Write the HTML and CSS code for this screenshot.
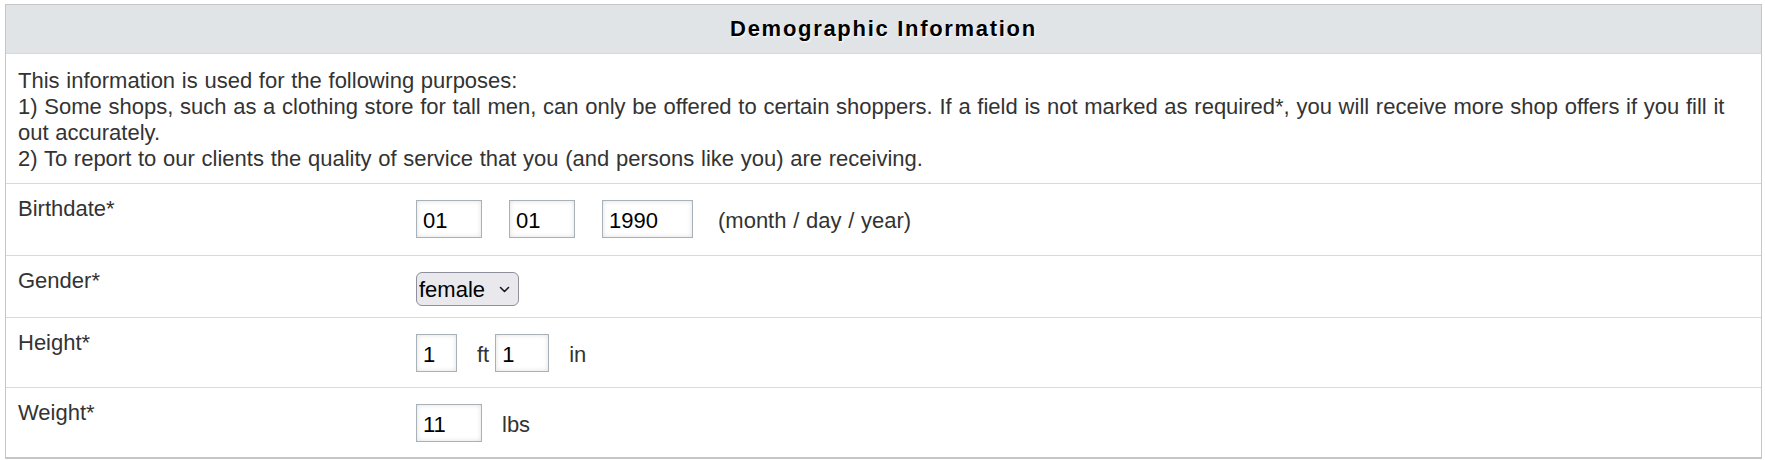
FILE: index.html
```html
<!DOCTYPE html>
<html lang="en">
<head>
<meta charset="utf-8">
<title>Demographic Information</title>
<link rel="stylesheet" href="styles.css">
</head>
<body>
<div class="panel">
  <div class="panel-head">Demographic Information</div>
  <div class="intro">This information is used for the following purposes:<br>1) Some shops, such as a clothing store for tall men, can only be offered to certain shoppers. If a field is not marked as required*, you will receive more shop offers if you fill it out accurately.<br>2) To report to our clients the quality of service that you (and persons like you) are receiving.</div>
  <div class="row row-birth">
    <div class="label">Birthdate*</div>
    <div class="field">
      <input class="inp w-2 next-inp" type="text" value="01">
      <input class="inp w-2 next-inp" type="text" value="01">
      <input class="inp w-4 next-unit-wide" type="text" value="1990">
      <span class="unit">(month / day / year)</span>
    </div>
  </div>
  <div class="row row-gender">
    <div class="label">Gender*</div>
    <div class="field">
      <span class="select-wrap">
        <select class="sel">
          <option>female</option>
          <option>male</option>
        </select>
        <svg class="chev" width="11" height="7" viewBox="0 0 11 7" aria-hidden="true"><path d="M1.5 1.5 L5.5 5.5 L9.5 1.5" fill="none" stroke="#1a1a1a" stroke-width="1.6" stroke-linecap="round" stroke-linejoin="round"/></svg>
      </span>
    </div>
  </div>
  <div class="row">
    <div class="label">Height*</div>
    <div class="field">
      <input class="inp w-1 next-unit" type="text" value="1">
      <span class="unit next-inp-small">ft</span>
      <input class="inp w-in next-unit" type="text" value="1">
      <span class="unit">in</span>
    </div>
  </div>
  <div class="row">
    <div class="label">Weight*</div>
    <div class="field">
      <input class="inp w-2 next-unit" type="text" value="11">
      <span class="unit">lbs</span>
    </div>
  </div>
</div>
</body>
</html>
```

FILE: styles.css
```css
html, body {
  margin: 0;
  padding: 0;
  background: #ffffff;
}

body {
  font-family: "Liberation Sans", Arial, sans-serif;
  font-size: 22px;
  word-spacing: 0.6px;
  color: #333333;
}

.panel {
  margin: 4px 3px 0 5px;
  border: 1px solid #c6c6c6;
  border-bottom: 2px solid #c4c6c6;
  background: #ffffff;
}

.panel-head {
  height: 48px;
  display: flex;
  align-items: center;
  justify-content: center;
  background: #e1e4e7;
  border-bottom: 1px solid #d3dbdf;
  font-weight: bold;
  font-size: 22px;
  letter-spacing: 1.7px;
  word-spacing: 0;
  color: #000000;
  text-shadow: 1px 1px 2px rgba(255, 255, 255, 0.95);
}

.intro {
  padding: 14px 18px 11px 12px;
  line-height: 26px;
}

.row {
  display: grid;
  grid-template-columns: 398px 1fr;
  border-top: 1px solid #d3dbdf;
}

.label {
  padding: 12px 12px 0 12px;
  line-height: 25.3px;
}

.field {
  display: flex;
  align-items: baseline;
  padding: 12px 12px 12px 12px;
}

.row-birth .field {
  padding-bottom: 14px;
}

.row-gender .field {
  padding-bottom: 11px;
}

.inp {
  box-sizing: border-box;
  height: 38px;
  margin: 4px 0 3px 0;
  padding: 3px 4px 0 6px;
  border: 1px solid #a9b1b8;
  border-radius: 0;
  background: #ffffff;
  box-shadow: inset 0 0 5px rgba(0, 0, 0, 0.13);
  font-family: "Liberation Sans", Arial, sans-serif;
  font-size: 22px;
  color: #000000;
  outline: none;
}

.w-1 { width: 41px; }
.w-2 { width: 66px; }
.w-4 { width: 91px; }
.w-in { width: 54px; }

.next-inp { margin-right: 27px; }
.next-unit { margin-right: 20px; }
.next-unit-wide { margin-right: 25px; }
.next-inp-small { margin-right: 6px; }

.unit {
  color: #333333;
  line-height: 25.3px;
}

.select-wrap {
  position: relative;
  display: inline-block;
  margin-top: 4px;
}

.sel {
  -webkit-appearance: none;
  appearance: none;
  box-sizing: border-box;
  width: 103px;
  height: 34px;
  margin: 0;
  padding: 0 0 0 2px;
  border: 1px solid #8f8f9d;
  border-radius: 6px;
  background: #e9e9ed;
  font-family: "Liberation Sans", Arial, sans-serif;
  font-size: 22px;
  color: #000000;
  display: block;
}

.chev {
  position: absolute;
  right: 9px;
  top: 14px;
  pointer-events: none;
}
```
